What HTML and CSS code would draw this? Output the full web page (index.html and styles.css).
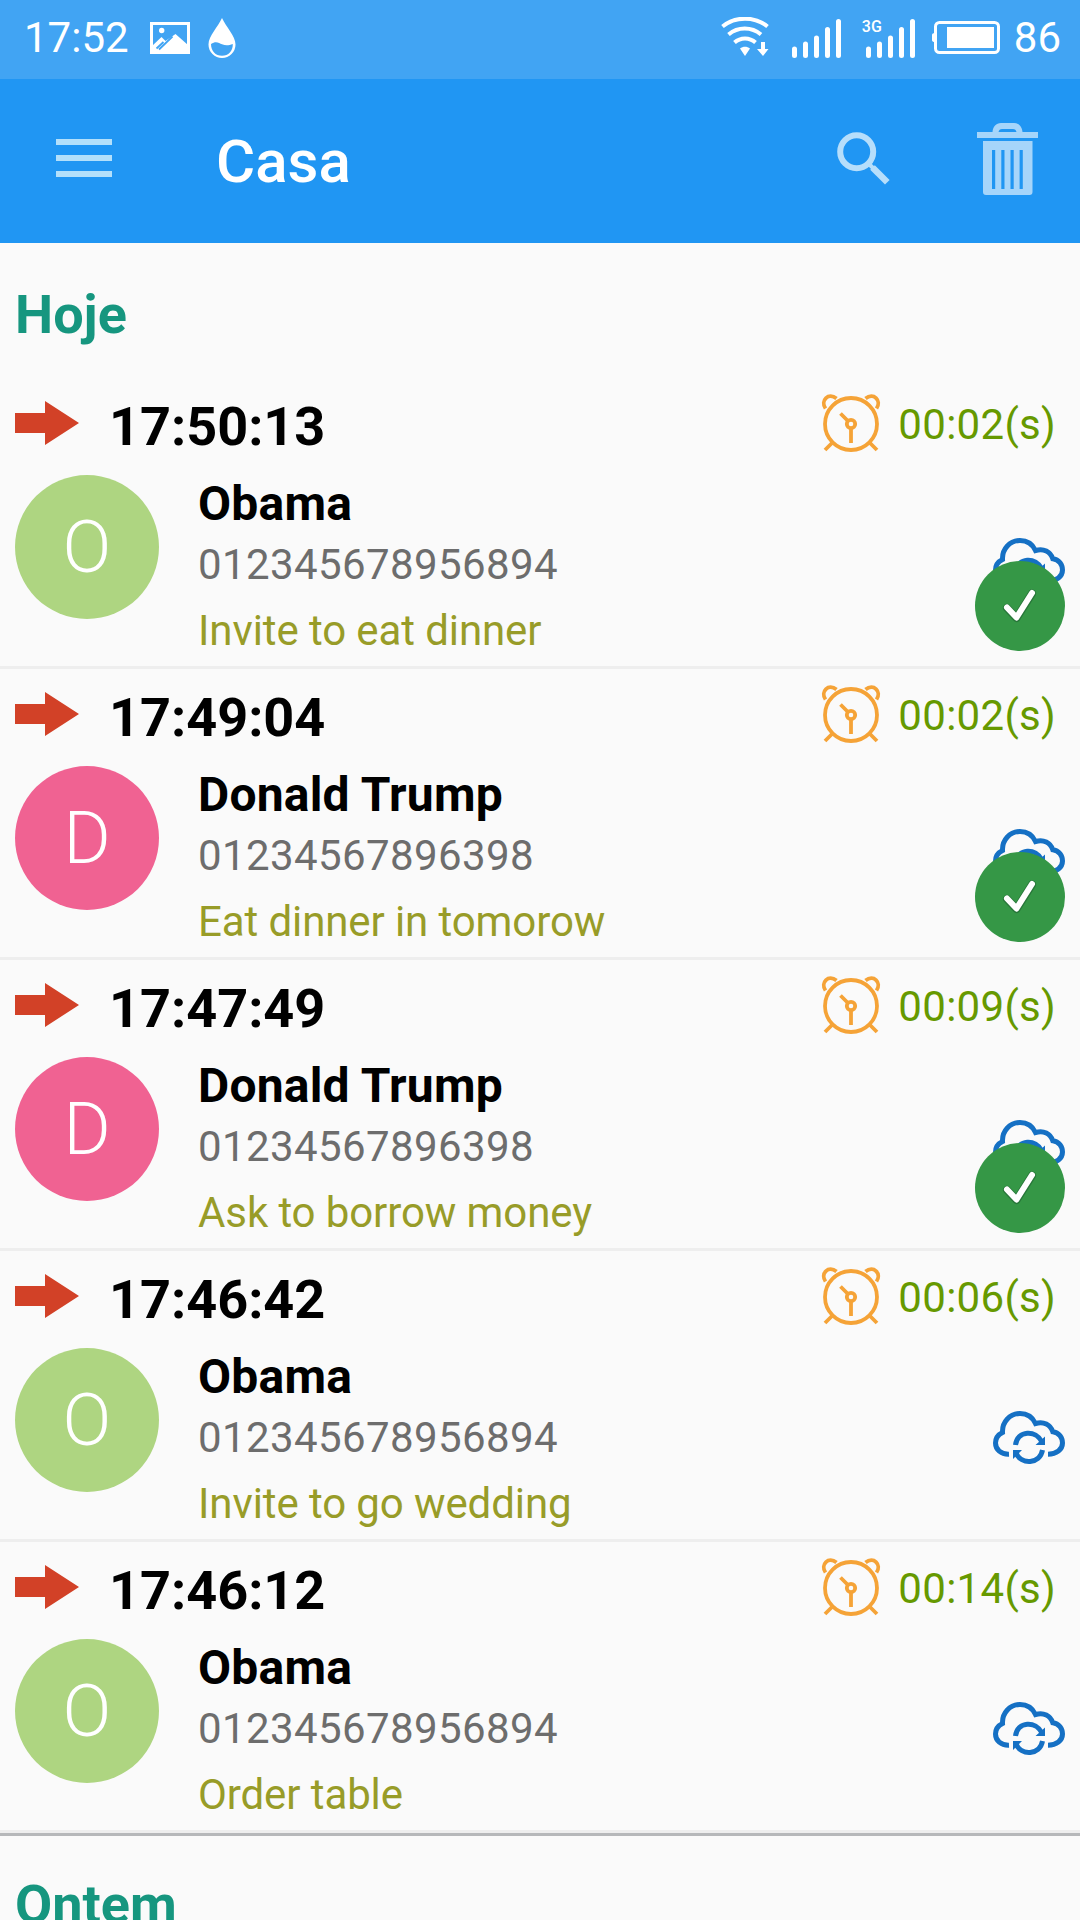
FILE: index.html
```html
<!DOCTYPE html>
<html lang="pt">
<head>
  <meta charset="UTF-8">
  <meta name="viewport" content="width=device-width, initial-scale=1.0">
  <title>Casa</title>
  <link rel="stylesheet" href="styles.css">
</head>
<body class="body">
  <!-- Icons used in every row -->
  <svg class="sprite">
    <symbol id="arrow" viewBox="0 0 64 44">
      <path d="M0 12h30V0l34 22-34 22V32H0z" fill="#d24127"/>
    </symbol>
    <symbol id="clock" viewBox="0 0 60 58">
      <g fill="none" stroke="#f5a337" stroke-width="3.8">
        <circle cx="30" cy="30" r="26"/>
        <circle cx="30" cy="30" r="4.2"/>
        <path d="M27 27l-7.500-7.500M30 34v15M12 48l-8 8M48 48l8 8"/>
        <path d="M4.500 14.500C-1 6.500 7.500 -2 15.500 4.500M55.500 14.500C61 6.500 52.500 -2 44.500 4.500"/>
      </g>
    </symbol>
    <symbol id="cloud" viewBox="0 0 72 53">
      <g fill="none" stroke="#1570c4" stroke-width="5">
        <path d="M16 43.200C8 43.500 2.500 38.500 2.500 32c0-5 3-8.500 7-10.500C9 11 17 2.500 27 2.500c7 0 12.500 3.500 15.500 10 8-2.500 15 1 17.300 8.300C66 21.500 69.500 26.500 69.500 32c0 6.500-6 11.200-14.500 11.200"/>
        <path d="M22.500 34C24.500 19 43 18.500 49 31M49.500 39C47 53.500 28 54 23 42"/>
      </g>
      <path d="M52 25.500V34H42.500zM20 48V39h9z" fill="#1570c4"/>
    </symbol>
    <symbol id="done" viewBox="0 0 90 90">
      <circle cx="45" cy="45" r="45" fill="#359746"/>
      <path d="M32 47l9.500 10L57 32.500" fill="none" stroke="#28773a" stroke-width="8" stroke-linecap="round" stroke-linejoin="round"/>
      <path d="M32 46.500l9.500 10L57 32" fill="none" stroke="#fff" stroke-width="6" stroke-linecap="round" stroke-linejoin="round"/>
    </symbol>
  </svg>

  <header>
    <div class="status">
      <span class="status-time">17:52</span>
      <svg class="status-picture" width="40" height="32" viewBox="0 0 40 32">
        <path d="M1.500 1.500h37v29h-37z" fill="none" stroke="#fff" stroke-width="3"/>
        <circle cx="11.700" cy="8.500" r="2.700" fill="#fff"/>
        <path d="M2 24l9.500-9 4 4L25.500 12 38 23v8H2z" fill="#fff"/>
        <path d="M6.500 26.500l7-6.500M9 27.500L22.500 14.500" stroke="#41a4f3" stroke-width="1.800"/>
      </svg>
      <svg class="status-drop" width="28" height="41" viewBox="0 0 28 41">
        <path d="M14 0C10 9 .5 18 .5 26.500a13.500 13.500 0 0 0 27 0C27.500 18 18 9 14 0z" fill="#fff"/>
        <path d="M3 26c5-3.500 8-1 11 .3 4 1.500 7 1 10.800-.3C25 33 20.500 37.800 14 37.800S3 33 3 26z" fill="#41a4f3"/>
      </svg>
      <svg class="status-wifi" width="48" height="40" viewBox="0 0 48 40">
        <g fill="none" stroke="#fff" stroke-width="4">
          <path d="M1.500 9.500C14-1 34-1 46.500 9.500M7.500 17.500c9.500-8 23-8 32.500 0M13.500 25.500c6-5.500 15-5.500 21 0"/>
          <path d="M42 25v8"/>
        </g>
        <path d="M19 31.500c3-2.200 7-2.200 10 0L24 39zM36 32h11.500L42 39z" fill="#fff"/>
      </svg>
      <svg class="status-signal" width="49" height="39" viewBox="0 0 49 39">
        <path d="M2.500 30v6.500M13.500 25v11.500M24.500 19v17.500M35.500 10.500v26M46.500 2.500v34" stroke="#fff" stroke-width="5" stroke-linecap="round"/>
      </svg>
      <div class="mobile">
        <svg class="status-signal" width="49" height="39" viewBox="0 0 49 39">
          <path d="M2.500 30v6.500M13.500 25v11.500M24.500 19v17.500M35.500 10.500v26M46.500 2.500v34" stroke="#fff" stroke-width="5" stroke-linecap="round"/>
        </svg>
        <span class="mobile-type">3G</span>
      </div>
      <svg class="status-battery" width="68" height="33" viewBox="0 0 68 33">
        <rect x="3.500" y="1.500" width="63" height="30" rx="4" fill="none" stroke="#fff" stroke-width="3"/>
        <path d="M15 6h47v21H15zM0 14q0-2 3-2v9q-3 0-3-2z" fill="#fff"/>
      </svg>
      <span class="status-level">86</span>
    </div>
    <div class="toolbar">
      <div class="menu"><i></i><i></i><i></i></div>
      <h1 class="title">Casa</h1>
      <svg class="search" width="53" height="53" viewBox="0 0 53 53">
        <circle cx="19.700" cy="19.700" r="16.500" fill="none" stroke="#b6defb" stroke-width="6"/>
        <path d="M35.500 35.500L50.300 50.300" stroke="#b6defb" stroke-width="6.500"/>
        <path d="M31 31l5 5" stroke="#b6defb" stroke-width="4"/>
      </svg>
      <svg class="trash" width="61" height="72" viewBox="0 0 61 72">
        <g fill="#a6d5fa">
          <path fill-rule="evenodd" d="M0 9h15.500C16 3.500 19 0 24 0h13c5 0 8 3.500 8.500 9H61v6H0zM21.500 9H39.500c-.5-2-1.500-3-3.500-3H25c-2 0-3 1-3.500 3z"/>
          <path fill-rule="evenodd" d="M6 18h49.500v51q0 3-3 3H9q-3 0-3-3zM15 27v39h3.200V27zM24.300 27v39h3.200V27zM33.500 27v39h3.200V27zM42.600 27v39h3.200V27z"/>
        </g>
      </svg>
    </div>
  </header>

  <main>
    <h2 class="day">Hoje</h2>
    <div class="call">
      <div class="call-head">
        <svg class="arrow"><use href="#arrow"/></svg>
        <span class="time">17:50:13</span>
        <svg class="clock"><use href="#clock"/></svg>
        <span class="duration">00:02(s)</span>
      </div>
      <div class="call-body">
        <div class="avatar green">O</div>
        <div class="info">
          <div class="name">Obama</div>
          <div class="phone">012345678956894</div>
          <div class="note">Invite to eat dinner</div>
        </div>
        <div class="sync">
          <svg class="cloud"><use href="#cloud"/></svg>
          <svg class="done"><use href="#done"/></svg>
        </div>
      </div>
    </div>
    <div class="call">
      <div class="call-head">
        <svg class="arrow"><use href="#arrow"/></svg>
        <span class="time">17:49:04</span>
        <svg class="clock"><use href="#clock"/></svg>
        <span class="duration">00:02(s)</span>
      </div>
      <div class="call-body">
        <div class="avatar pink">D</div>
        <div class="info">
          <div class="name">Donald Trump</div>
          <div class="phone">01234567896398</div>
          <div class="note">Eat dinner in tomorow</div>
        </div>
        <div class="sync">
          <svg class="cloud"><use href="#cloud"/></svg>
          <svg class="done"><use href="#done"/></svg>
        </div>
      </div>
    </div>
    <div class="call">
      <div class="call-head">
        <svg class="arrow"><use href="#arrow"/></svg>
        <span class="time">17:47:49</span>
        <svg class="clock"><use href="#clock"/></svg>
        <span class="duration">00:09(s)</span>
      </div>
      <div class="call-body">
        <div class="avatar pink">D</div>
        <div class="info">
          <div class="name">Donald Trump</div>
          <div class="phone">01234567896398</div>
          <div class="note">Ask to borrow money</div>
        </div>
        <div class="sync">
          <svg class="cloud"><use href="#cloud"/></svg>
          <svg class="done"><use href="#done"/></svg>
        </div>
      </div>
    </div>
    <div class="call">
      <div class="call-head">
        <svg class="arrow"><use href="#arrow"/></svg>
        <span class="time">17:46:42</span>
        <svg class="clock"><use href="#clock"/></svg>
        <span class="duration">00:06(s)</span>
      </div>
      <div class="call-body">
        <div class="avatar green">O</div>
        <div class="info">
          <div class="name">Obama</div>
          <div class="phone">012345678956894</div>
          <div class="note">Invite to go wedding</div>
        </div>
        <div class="sync">
          <svg class="cloud"><use href="#cloud"/></svg>
        </div>
      </div>
    </div>
    <div class="call">
      <div class="call-head">
        <svg class="arrow"><use href="#arrow"/></svg>
        <span class="time">17:46:12</span>
        <svg class="clock"><use href="#clock"/></svg>
        <span class="duration">00:14(s)</span>
      </div>
      <div class="call-body">
        <div class="avatar green">O</div>
        <div class="info">
          <div class="name">Obama</div>
          <div class="phone">012345678956894</div>
          <div class="note">Order table</div>
        </div>
        <div class="sync">
          <svg class="cloud"><use href="#cloud"/></svg>
        </div>
      </div>
    </div>
    <h2 class="day day-next">Ontem</h2>
  </main>
</body>
</html>
```
FILE: styles.css
```css
.body {
  margin: 0;
  height: 1920px;
  overflow: hidden;
  background-color: #fafafa;
  font-family: Roboto, sans-serif;
}
svg {
  display: block;
  flex-shrink: 0;
}
.sprite {
  display: none;
}
.status {
  display: flex;
  align-items: flex-start;
  height: 79px;
  box-sizing: border-box;
  padding: 0 19px 0 24px;
  background-color: #41a4f3;
  color: #fff;
  font-size: 42px;
  line-height: 49px;
}
.status-time {
  width: 126px;
  padding-top: 13px;
}
.status-picture {
  margin-top: 22px;
}
.status-drop {
  margin: 18px auto 0 18px;
}
.status-wifi {
  margin: 17px 23px 0 0;
}
.status-signal {
  margin-top: 19px;
}
.mobile {
  position: relative;
  margin: 0 17px 0 25px;
}
.mobile-type {
  position: absolute;
  top: 19px;
  left: -4px;
  font-size: 16px;
  font-weight: 500;
  line-height: 16px;
}
.status-battery {
  margin-top: 21px;
}
.status-level {
  padding-top: 13px;
  margin-left: 14px;
}
.toolbar {
  display: flex;
  align-items: flex-start;
  height: 164px;
  box-sizing: border-box;
  padding: 0 42px 0 56px;
  background-color: #2096f3;
}
.menu {
  display: flex;
  flex-direction: column;
  gap: 10px;
  width: 56px;
  margin-top: 60px;
}
.menu i {
  height: 6px;
  background-color: #b3e0fb;
}
.title {
  margin: 48px auto 0 104px;
  font-size: 60px;
  font-weight: 500;
  line-height: 70px;
  color: #fff;
}
.search {
  margin: 53px 87px 0 0;
}
.trash {
  margin-top: 44px;
}
.day {
  margin: 0;
  height: 135px;
  box-sizing: border-box;
  padding: 40px 15px 0;
  font-size: 54px;
  font-weight: 700;
  line-height: 63px;
  color: #16967f;
}
.day-next {
  border-top: 3px solid #b6b8ba;
  padding-top: 37px;
}
.call {
  height: 291px;
  box-sizing: border-box;
  padding: 0 15px;
  border-bottom: 3px solid #eeeeee;
}
.call-head {
  display: flex;
  align-items: flex-start;
  height: 97px;
}
.arrow {
  width: 64px;
  height: 44px;
  margin-top: 23px;
}
.time {
  margin: 17px auto 0 30px;
  font-size: 54px;
  font-weight: 700;
  line-height: 63px;
  color: #000;
}
.clock {
  width: 60px;
  height: 58px;
  margin-top: 16px;
}
.duration {
  margin: 22px 9px 0 17px;
  font-size: 42px;
  line-height: 49px;
  letter-spacing: 0.3px;
  color: #669900;
}
.call-body {
  display: flex;
  align-items: flex-start;
}
.avatar {
  width: 144px;
  height: 144px;
  border-radius: 50%;
  font-size: 72px;
  font-weight: 300;
  line-height: 146px;
  text-align: center;
  color: #fff;
}
.green {
  background-color: #aed581;
}
.pink {
  background-color: #f06292;
}
.info {
  flex: 1;
  margin-left: 39px;
}
.name {
  padding-top: 1px;
  font-size: 48px;
  font-weight: 700;
  line-height: 56px;
  letter-spacing: 0.2px;
  color: #000;
}
.phone {
  margin-top: 8px;
  font-size: 42px;
  line-height: 49px;
  letter-spacing: 0.4px;
  color: #6d6d6d;
}
.note {
  margin-top: 17px;
  font-size: 42px;
  line-height: 49px;
  letter-spacing: -0.1px;
  color: #989c28;
}
.sync {
  position: relative;
  padding-top: 63px;
}
.cloud {
  width: 72px;
  height: 53px;
}
.done {
  position: absolute;
  top: 86px;
  right: 0;
  width: 90px;
  height: 90px;
}
```
